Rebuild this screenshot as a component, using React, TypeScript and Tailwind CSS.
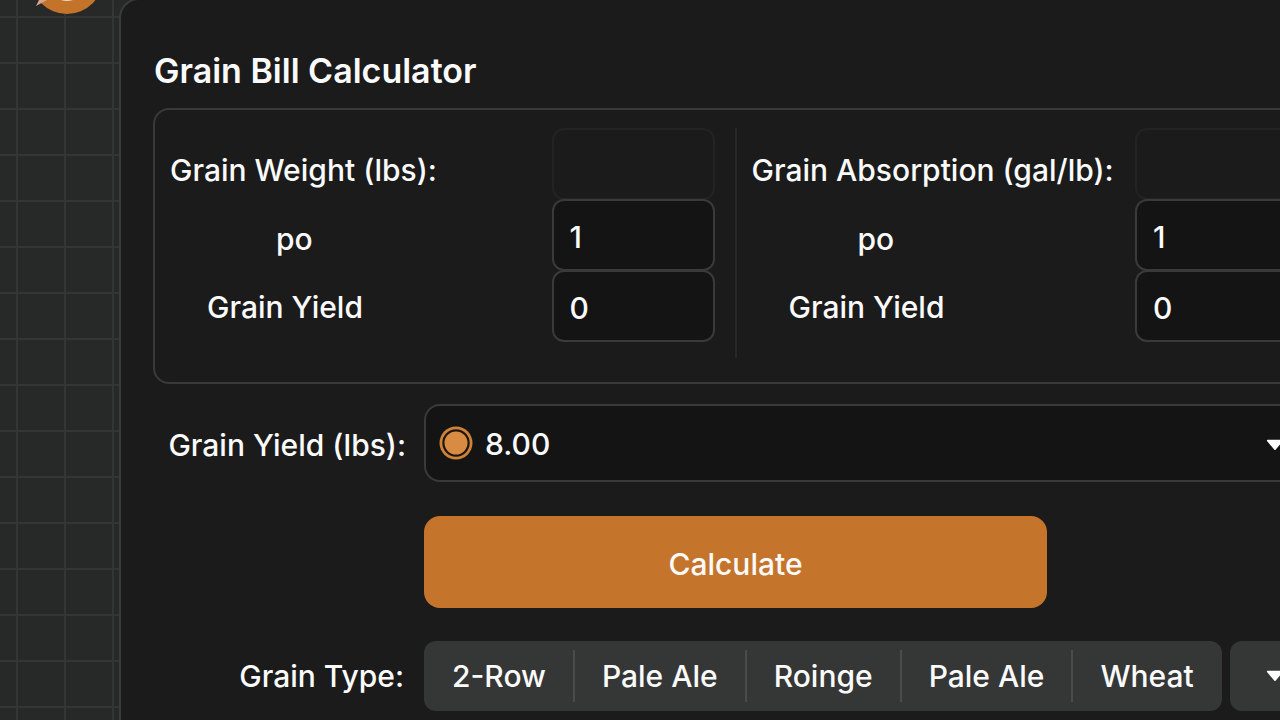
import { useState } from "react";

const columns = [
  { id: "weight", title: "Grain Weight (lbs):" },
  { id: "absorption", title: "Grain Absorption (gal/lb):" },
];

const grainTypes = [
  { id: "two-row", title: "2-Row" },
  { id: "pale-ale", title: "Pale Ale" },
  { id: "roinge", title: "Roinge" },
  { id: "pale-ale-2", title: "Pale Ale" },
  { id: "wheat", title: "Wheat" },
];

function Caret() {
  return (
    <svg viewBox="0 0 18 12" className="h-3 w-[18px]" aria-hidden>
      <path
        d="M1.6 0.8h14.8a0.8 0.8 0 0 1 0.6 1.3l-7.2 8.4a1 1 0 0 1-1.6 0L1 2.1a0.8 0.8 0 0 1 0.6-1.3z"
        fill="#ffffff"
      />
    </svg>
  );
}

function Logo() {
  return (
    <svg
      viewBox="0 0 80 80"
      className="absolute -top-[62px] left-[27px] size-20"
      aria-hidden
    >
      <circle cx="40" cy="40" r="36" fill="#c4732a" />
      <circle cx="40" cy="44" r="19" fill="#ecd9c0" />
      <path d="M9 68L13 60L20 62Z" fill="#d9a48a" />
    </svg>
  );
}

function FieldRow({
  id,
  label,
  labelClass,
  inputClass,
  value,
}: {
  id: string;
  label: string;
  labelClass: string;
  inputClass: string;
  value: string;
}) {
  return (
    <div className="flex items-center">
      <label htmlFor={id} className={`flex-1 whitespace-nowrap ${labelClass}`}>
        {label}
      </label>
      <input
        id={id}
        defaultValue={value}
        className={`h-[72px] w-[163px] rounded-xl border-2 px-4 pt-1 outline-none ${inputClass}`}
      />
    </div>
  );
}

function FieldColumn({ id, title }: { id: string; title: string }) {
  return (
    <div className="flex flex-col -space-y-px pr-5 pl-[15px]">
      <FieldRow
        id={id}
        label={title}
        labelClass="pt-3"
        inputClass="border-[#232323] bg-transparent"
        value=""
      />
      <FieldRow
        id={`${id}-po`}
        label="po"
        labelClass="pt-2 pl-[106px]"
        inputClass="border-[#3a3a3a] bg-[#141414]"
        value="1"
      />
      <FieldRow
        id={`${id}-yield`}
        label="Grain Yield"
        labelClass="pt-0.5 pl-[37px]"
        inputClass="border-[#3a3a3a] bg-[#141414]"
        value="0"
      />
    </div>
  );
}

export default function App() {
  const [selected, setSelected] = useState("");

  return (
    <main className="relative h-screen overflow-hidden bg-[#272828] bg-[linear-gradient(#343535_2px,transparent_2px),linear-gradient(90deg,#343535_2px,transparent_2px)] bg-[size:48px_46px] bg-[position:16px_16px] pl-[119px] font-['Inter',sans-serif] text-[30px] leading-9 font-medium text-[#fafafa]">
      <Logo />
      <section className="-mt-0.5 -mr-[74px] rounded-[20px] border-2 border-[#3a3b3b] bg-[#1b1b1b] px-8 pt-[50px] pb-20">
        <h1 className="pl-px text-[34px] leading-[42px] font-semibold">
          Grain Bill Calculator
        </h1>

        <div className="mt-4 grid grid-cols-2 rounded-2xl border-2 border-[#393a3a] pt-[18px] pb-6">
          {columns.map((col, i) => (
            <div
              key={col.id}
              className={i === 0 ? "border-r-2 border-[#272727] pb-4" : "pb-4"}
            >
              <FieldColumn id={col.id} title={col.title} />
            </div>
          ))}
        </div>

        <div className="mt-5 flex items-center">
          <label
            htmlFor="total-yield"
            className="w-[271px] pt-1 pr-[18px] text-right whitespace-nowrap"
          >
            Grain Yield (lbs):
          </label>
          <div className="relative flex-1">
            <select
              id="total-yield"
              className="h-[78px] w-full appearance-none rounded-2xl border-2 border-[#393a3a] bg-[#141414] pt-0.5 pl-[59px] outline-none"
            >
              <option>8.00</option>
            </select>
            <svg
              viewBox="0 0 34 34"
              className="pointer-events-none absolute top-[22px] left-[15px] size-[34px]"
              aria-hidden
            >
              <circle cx="17" cy="17" r="16.5" fill="#cd833b" />
              <circle
                cx="17"
                cy="17"
                r="12.6"
                fill="#d88c43"
                stroke="#21150c"
                strokeWidth="2.2"
              />
            </svg>
            <span className="pointer-events-none absolute inset-y-0 right-9 flex items-center pt-1">
              <Caret />
            </span>
          </div>
        </div>

        <div className="mt-[34px] pl-[271px]">
          <button
            type="button"
            className="h-[92px] w-full max-w-[623px] rounded-2xl bg-[#c5752b] pt-1"
          >
            Calculate
          </button>
        </div>

        <div className="mt-[33px] flex items-center">
          <span
            id="grain-type"
            className="w-[271px] pr-5 text-right whitespace-nowrap"
          >
            Grain Type:
          </span>
          <div
            role="group"
            aria-labelledby="grain-type"
            className="flex h-[70px] shrink-0 items-center rounded-xl bg-[#353636] px-px"
          >
            {grainTypes.map((g) => (
              <button
                key={g.id}
                type="button"
                aria-pressed={selected === g.id}
                onClick={() => setSelected(g.id)}
                className="h-[52px] border-r-2 border-[#4a4b4b] px-[27px] whitespace-nowrap last:border-r-0"
              >
                {g.title}
              </button>
            ))}
          </div>
          <button
            type="button"
            aria-label="More grain types"
            className="ml-2 flex h-[70px] flex-1 items-center justify-center rounded-xl bg-[#353636]"
          >
            <Caret />
          </button>
        </div>
      </section>
    </main>
  );
}
